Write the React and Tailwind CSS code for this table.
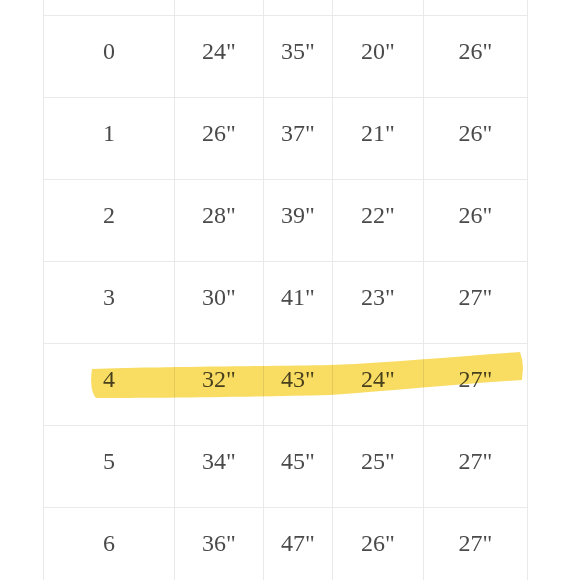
import React from 'react';

const rows = [
  ['', '', '', '', ''],
  ['0', '24"', '35"', '20"', '26"'],
  ['1', '26"', '37"', '21"', '26"'],
  ['2', '28"', '39"', '22"', '26"'],
  ['3', '30"', '41"', '23"', '27"'],
  ['4', '32"', '43"', '24"', '27"'],
  ['5', '34"', '45"', '25"', '27"'],
  ['6', '36"', '47"', '26"', '27"'],
];

const App = () => {
  return (
    <div className="relative w-[580px] h-[580px] overflow-hidden bg-white">
      {/* Size table */}
      <div
        className="ml-[43px] mt-[-66px] w-[485px] border-l border-[#e9e9e9] text-[24px] text-[#4a4a4a]"
        style={{ fontFamily: '"Liberation Serif", "Times New Roman", serif' }}
      >
        {rows.map((row, i) => (
          <div
            key={i}
            className="grid grid-cols-[131px_89px_69px_91px_104px] h-[82px] border-b border-[#e9e9e9]"
          >
            {row.map((cell, j) => (
              <div
                key={j}
                className="flex items-center justify-center pb-[11px] leading-none border-r border-[#e9e9e9]"
              >
                {cell}
              </div>
            ))}
          </div>
        ))}
      </div>

      {/* Highlighter stroke over row 4 */}
      <svg
        className="absolute inset-0 pointer-events-none mix-blend-multiply"
        width="580"
        height="580"
        viewBox="0 0 580 580"
      >
        <path
          d="M92 369 C150 367 280 366 330 365 C400 362 460 356 520 352 Q523 360 523 368 L522 380 C460 384 400 390 330 395 C250 397 150 398 96 398 Q89 390 92 369 Z"
          fill="#f9dc62"
        />
      </svg>
    </div>
  );
};

export default App;
